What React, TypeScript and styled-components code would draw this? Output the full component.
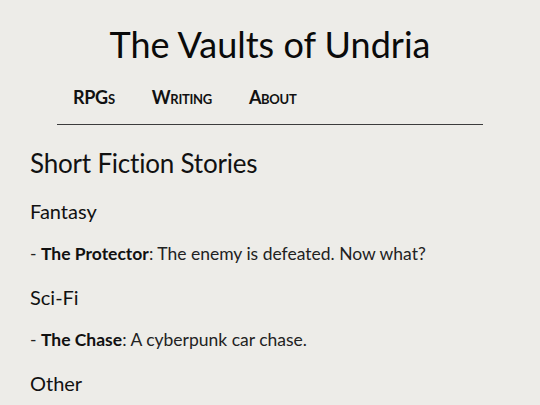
import React from "react";
import styled, { createGlobalStyle } from "styled-components";

const Global = createGlobalStyle`
  html, body { margin: 0; padding: 0; background: #edece8; }
  body { font-family: Lato, "Open Sans", sans-serif; color: #111; }
`;

const Page = styled.div`
  width: 540px;
  height: 405px;
  overflow: hidden;
  box-sizing: border-box;
`;

const Header = styled.header`
  padding: 0 57px;
  display: flex;
  flex-direction: column;
`;

const Title = styled.h1`
  margin: 22px 0 0;
  text-align: center;
  font-size: 36px;
  font-weight: 400;
  line-height: 44px;
  color: #0a0a0a;
`;

const Nav = styled.nav`
  display: flex;
  gap: 37px;
  padding: 16px 0 12px 16px;
  height: 30px;
  align-items: center;
  border-bottom: 1.5px solid #3c3c3c;
`;

const NavLink = styled.a`
  font-size: 18px;
  font-weight: 700;
  font-variant: small-caps;
  color: #111;
  text-decoration: none;
  letter-spacing: -0.3px;
`;

const Main = styled.main`
  padding: 22px 30px 0;
`;

const H2 = styled.h2`
  margin: 0 0 19px;
  font-size: 26px;
  font-weight: 400;
  line-height: 32px;
  letter-spacing: -0.2px;
`;

const H3 = styled.h3`
  margin: 0 0 17px;
  font-size: 20px;
  font-weight: 400;
  line-height: 26px;
`;

const Entry = styled.p`
  margin: 0 0 17px;
  font-size: 17.5px;
  line-height: 26px;
  font-weight: 400;
  color: #222;
  b { font-weight: 700; color: #111; }
`;

export default function App() {
  return (
    <Page>
      <Global />
      <Header>
        <Title>The Vaults of Undria</Title>
        <Nav>
          <NavLink href="#">RPGs</NavLink>
          <NavLink href="#">Writing</NavLink>
          <NavLink href="#">About</NavLink>
        </Nav>
      </Header>
      <Main>
        <H2>Short Fiction Stories</H2>
        <H3>Fantasy</H3>
        <Entry>- <b>The Protector</b>: The enemy is defeated. Now what?</Entry>
        <H3>Sci-Fi</H3>
        <Entry>- <b>The Chase</b>: A cyberpunk car chase.</Entry>
        <H3>Other</H3>
      </Main>
    </Page>
  );
}
